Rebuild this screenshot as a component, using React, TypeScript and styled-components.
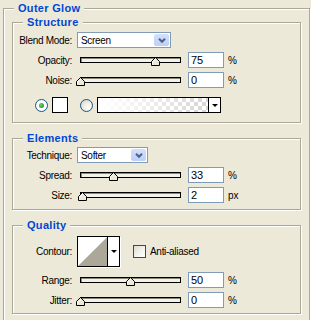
import React from "react";
import styled, { createGlobalStyle } from "styled-components";

const GlobalStyle = createGlobalStyle`
  html, body {
    margin: 0;
    padding: 0;
    background: #ece9d8;
    overflow: hidden;
  }
  body {
    font-family: "Liberation Sans", Arial, sans-serif;
    font-size: 10px;
    color: #000;
  }
`;

const Panel = styled.div`
  position: relative;
  box-sizing: border-box;
  width: 307px;
  margin: 8px 0 0 3px;
  padding: 13px 8px 16px 8px;
  border: 1px solid #aca899;
  box-shadow: inset 1px 1px 0 #fff, 1px 1px 0 #fff;
`;

const Group = styled.div<{ $pt: number; $pb: number }>`
  position: relative;
  display: flex;
  flex-direction: column;
  gap: 4px;
  padding: ${({ $pt }) => $pt}px 0 ${({ $pb }) => $pb}px 0;
  border: 1px solid #aca899;
  box-shadow: inset 1px 1px 0 #fff, 1px 1px 0 #fff;

  & + & {
    margin-top: 15px;
  }
`;

const Title = styled.span<{ $left: number }>`
  position: absolute;
  top: -7px;
  left: ${({ $left }) => $left}px;
  padding: 0 4px;
  background: #ece9d8;
  color: #0046d5;
  font-weight: bold;
  font-size: 11px;
  line-height: 13px;
  letter-spacing: 0.3px;
  white-space: nowrap;
`;

const Row = styled.div<{ $h?: number; $mt?: number }>`
  display: flex;
  align-items: center;
  height: ${({ $h }) => $h ?? 16}px;
  margin-top: ${({ $mt }) => $mt ?? 0}px;
`;

const Label = styled.span`
  width: 59px;
  margin-right: 5px;
  text-align: right;
  white-space: nowrap;
  letter-spacing: -0.3px;
`;

const Select = styled.div<{ $w: number }>`
  box-sizing: border-box;
  display: flex;
  align-items: center;
  width: ${({ $w }) => $w}px;
  height: 16px;
  padding-left: 3px;
  border: 1px solid #7f9db9;
  background: #fff;
  letter-spacing: -0.3px;
`;

const SelectButton = styled.span`
  display: flex;
  align-items: center;
  justify-content: center;
  width: 15px;
  height: 12px;
  margin-left: auto;
  margin-right: 1px;
  border-radius: 2px;
  background: linear-gradient(180deg, #d4e0fc 0%, #bccff8 100%);
`;

const SliderBox = styled.div`
  width: 111px;
  padding-left: 3px;
  box-sizing: border-box;
`;

const Track = styled.div`
  position: relative;
  box-sizing: border-box;
  width: 101px;
  height: 6px;
  border: 1px solid #000;
  background: #f3f2ea;
  box-shadow: inset 1px 1px 0 #8a8778;
`;

const Thumb = styled.svg`
  position: absolute;
  top: -1px;
  width: 9px;
  height: 9px;
`;

const NumberBox = styled.div`
  box-sizing: border-box;
  width: 36px;
  height: 16px;
  padding-left: 2px;
  border: 1px solid #7f9db9;
  background: #fff;
  font-size: 11px;
  line-height: 14px;
`;

const Unit = styled.span`
  margin-left: 4px;
  font-size: 10px;
`;

const Radio = styled.span<{ $checked?: boolean; $ml: number }>`
  box-sizing: border-box;
  display: flex;
  align-items: center;
  justify-content: center;
  width: 13px;
  height: 13px;
  margin-left: ${({ $ml }) => $ml}px;
  border: 1px solid #1c5180;
  border-radius: 50%;
  background: ${({ $checked }) =>
    $checked
      ? "#fff"
      : "radial-gradient(circle at 65% 65%, #fff 0%, #f0efe8 40%, #cfcdc2 100%)"};

  &::after {
    content: "";
    display: ${({ $checked }) => ($checked ? "block" : "none")};
    width: 5px;
    height: 5px;
    border-radius: 50%;
    background: radial-gradient(circle at 40% 40%, #6cd36c 0%, #21a121 70%);
  }
`;

const Swatch = styled.span`
  box-sizing: border-box;
  width: 16px;
  height: 16px;
  margin-left: 4px;
  border: 1px solid #000;
  background: #fff;
`;

const GradientPicker = styled.div`
  box-sizing: border-box;
  display: flex;
  width: 124px;
  height: 16px;
  margin-left: 4px;
  border: 1px solid #000;
`;

const GradientFill = styled.span`
  flex: 1;
  background:
    linear-gradient(90deg, #fff 0%, rgba(255, 255, 255, 0.6) 45%, rgba(255, 255, 255, 0) 100%),
    repeating-conic-gradient(#d6d6d6 0% 25%, #fff 0% 50%) 0 0 / 8px 8px;
`;

const DropArrow = styled.span`
  box-sizing: border-box;
  display: flex;
  align-items: center;
  justify-content: center;
  width: 12px;
  border-left: 1px solid #000;
  background: #fff;

  &::after {
    content: "";
    border-left: 3px solid transparent;
    border-right: 3px solid transparent;
    border-top: 3px solid #000;
  }
`;

const ContourBox = styled.div`
  box-sizing: border-box;
  display: flex;
  width: 43px;
  height: 31px;
  border: 1px solid #000;
  box-shadow: 1px 1px 0 #fff;
`;

const ContourSwatch = styled.svg`
  display: block;
  width: 30px;
  height: 29px;
  background: #fff;
`;

const CheckBox = styled.span`
  box-sizing: border-box;
  width: 13px;
  height: 13px;
  margin-left: 13px;
  border: 1px solid #1c5180;
  background: linear-gradient(135deg, #dcdbd3 0%, #f4f4f0 60%, #fff 100%);
`;

const CheckLabel = styled.span`
  margin-left: 4px;
  letter-spacing: -0.3px;
`;

const Chevron = () => (
  <svg width="8" height="5" viewBox="0 0 8 5">
    <polyline points="1,0.8 4,3.8 7,0.8" fill="none" stroke="#4d6185" strokeWidth="2" />
  </svg>
);

const SliderRow: React.FC<{ label: string; value: number; unit?: string; mt?: number }> = ({
  label,
  value,
  unit = "%",
  mt,
}) => (
  <Row $mt={mt}>
    <Label>{label}</Label>
    <SliderBox>
      <Track>
        <Thumb viewBox="0 0 9 9" style={{ left: value - 5 }}>
          <polygon points="4.5,0.5 8.5,4.5 8.5,8.5 0.5,8.5 0.5,4.5" fill="#ece9d8" stroke="#000" />
          <polyline points="1.5,7.5 1.5,5 4.5,1.9" fill="none" stroke="#fff" />
        </Thumb>
      </Track>
    </SliderBox>
    <NumberBox>{value}</NumberBox>
    <Unit>{unit}</Unit>
  </Row>
);

const App: React.FC = () => (
  <>
    <GlobalStyle />
    <Panel>
      <Title $left={10}>Outer Glow</Title>

      <Group $pt={9} $pb={9}>
        <Title $left={10}>Structure</Title>
        <Row>
          <Label>Blend Mode:</Label>
          <Select $w={94}>
            Screen
            <SelectButton>
              <Chevron />
            </SelectButton>
          </Select>
        </Row>
        <SliderRow label="Opacity:" value={75} />
        <SliderRow label="Noise:" value={0} />
        <Row $mt={5}>
          <Radio $checked $ml={22} />
          <Swatch />
          <Radio $ml={12} />
          <GradientPicker>
            <GradientFill />
            <DropArrow />
          </GradientPicker>
        </Row>
      </Group>

      <Group $pt={8} $pb={6}>
        <Title $left={10}>Elements</Title>
        <Row>
          <Label>Technique:</Label>
          <Select $w={71}>
            Softer
            <SelectButton>
              <Chevron />
            </SelectButton>
          </Select>
        </Row>
        <SliderRow label="Spread:" value={33} />
        <SliderRow label="Size:" value={2} unit="px" />
      </Group>

      <Group $pt={10} $pb={5}>
        <Title $left={10}>Quality</Title>
        <Row $h={31}>
          <Label>Contour:</Label>
          <ContourBox>
            <ContourSwatch viewBox="0 0 30 29" preserveAspectRatio="none">
              <polygon points="0,29 30,0 30,29" fill="#aca899" />
            </ContourSwatch>
            <DropArrow />
          </ContourBox>
          <CheckBox />
          <CheckLabel>Anti-aliased</CheckLabel>
        </Row>
        <SliderRow label="Range:" value={50} mt={1} />
        <SliderRow label="Jitter:" value={0} />
      </Group>
    </Panel>
  </>
);

export default App;
